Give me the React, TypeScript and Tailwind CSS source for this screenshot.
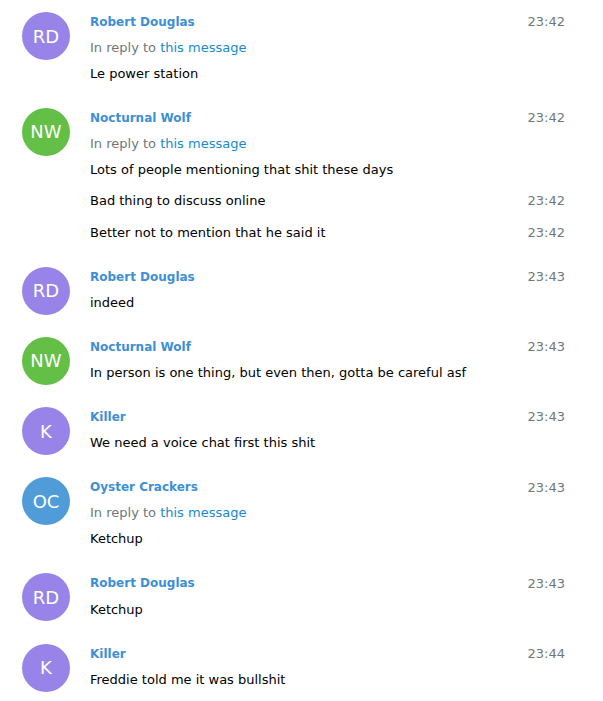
import React from 'react';

interface Line {
  text: string;
  time?: string;
}

interface Message {
  initials: string;
  name: string;
  color: string;
  time: string;
  reply?: boolean;
  lines: Line[];
}

const messages: Message[] = [
  { initials: 'RD', name: 'Robert Douglas', color: 'bg-[#9884e8]', time: '23:42', reply: true, lines: [{ text: 'Le power station' }] },
  {
    initials: 'NW',
    name: 'Nocturnal Wolf',
    color: 'bg-[#64bf47]',
    time: '23:42',
    reply: true,
    lines: [
      { text: 'Lots of people mentioning that shit these days' },
      { text: 'Bad thing to discuss online', time: '23:42' },
      { text: 'Better not to mention that he said it', time: '23:42' },
    ],
  },
  { initials: 'RD', name: 'Robert Douglas', color: 'bg-[#9884e8]', time: '23:43', lines: [{ text: 'indeed' }] },
  { initials: 'NW', name: 'Nocturnal Wolf', color: 'bg-[#64bf47]', time: '23:43', lines: [{ text: 'In person is one thing, but even then, gotta be careful asf' }] },
  { initials: 'K', name: 'Killer', color: 'bg-[#9884e8]', time: '23:43', lines: [{ text: 'We need a voice chat first this shit' }] },
  { initials: 'OC', name: 'Oyster Crackers', color: 'bg-[#4f9cd9]', time: '23:43', reply: true, lines: [{ text: 'Ketchup' }] },
  { initials: 'RD', name: 'Robert Douglas', color: 'bg-[#9884e8]', time: '23:43', lines: [{ text: 'Ketchup' }] },
  { initials: 'K', name: 'Killer', color: 'bg-[#9884e8]', time: '23:44', lines: [{ text: 'Freddie told me it was bullshit' }] },
];

const MessageGroup: React.FC<{ msg: Message; first: boolean }> = ({ msg, first }) => (
  <div className={`flex ${first ? 'pt-[9px]' : 'pt-[18.3px]'}`}>
    <div className={`mt-[3px] flex h-12 w-12 shrink-0 items-center justify-center rounded-full text-[18px] text-white ${msg.color}`}>
      {msg.initials}
    </div>
    <div className="ml-5 flex-1">
      <div className="flex h-[26px] items-center justify-between">
        <span className="text-[12px] font-bold text-[#3c8fd6]">{msg.name}</span>
        <span className="text-[#70777b]">{msg.time}</span>
      </div>
      {msg.reply && (
        <div className="flex h-[25.5px] items-center text-[#70777b]">
          In reply to&nbsp;<span className="text-[#168acd]">this message</span>
        </div>
      )}
      {msg.lines.map((line, i) => (
        <div key={i} className={`flex h-[26px] items-center justify-between text-black ${i > 0 ? 'mt-[5.5px]' : ''}`}>
          <span>{line.text}</span>
          {line.time && <span className="text-[#70777b]">{line.time}</span>}
        </div>
      ))}
    </div>
  </div>
);

export default function App() {
  return (
    <div className="min-h-[701px] bg-white pl-[22px] pr-[38px] text-[13px]" style={{ fontFamily: '"DejaVu Sans", Verdana, sans-serif' }}>
      {messages.map((m, i) => (
        <MessageGroup key={i} msg={m} first={i === 0} />
      ))}
    </div>
  );
}
